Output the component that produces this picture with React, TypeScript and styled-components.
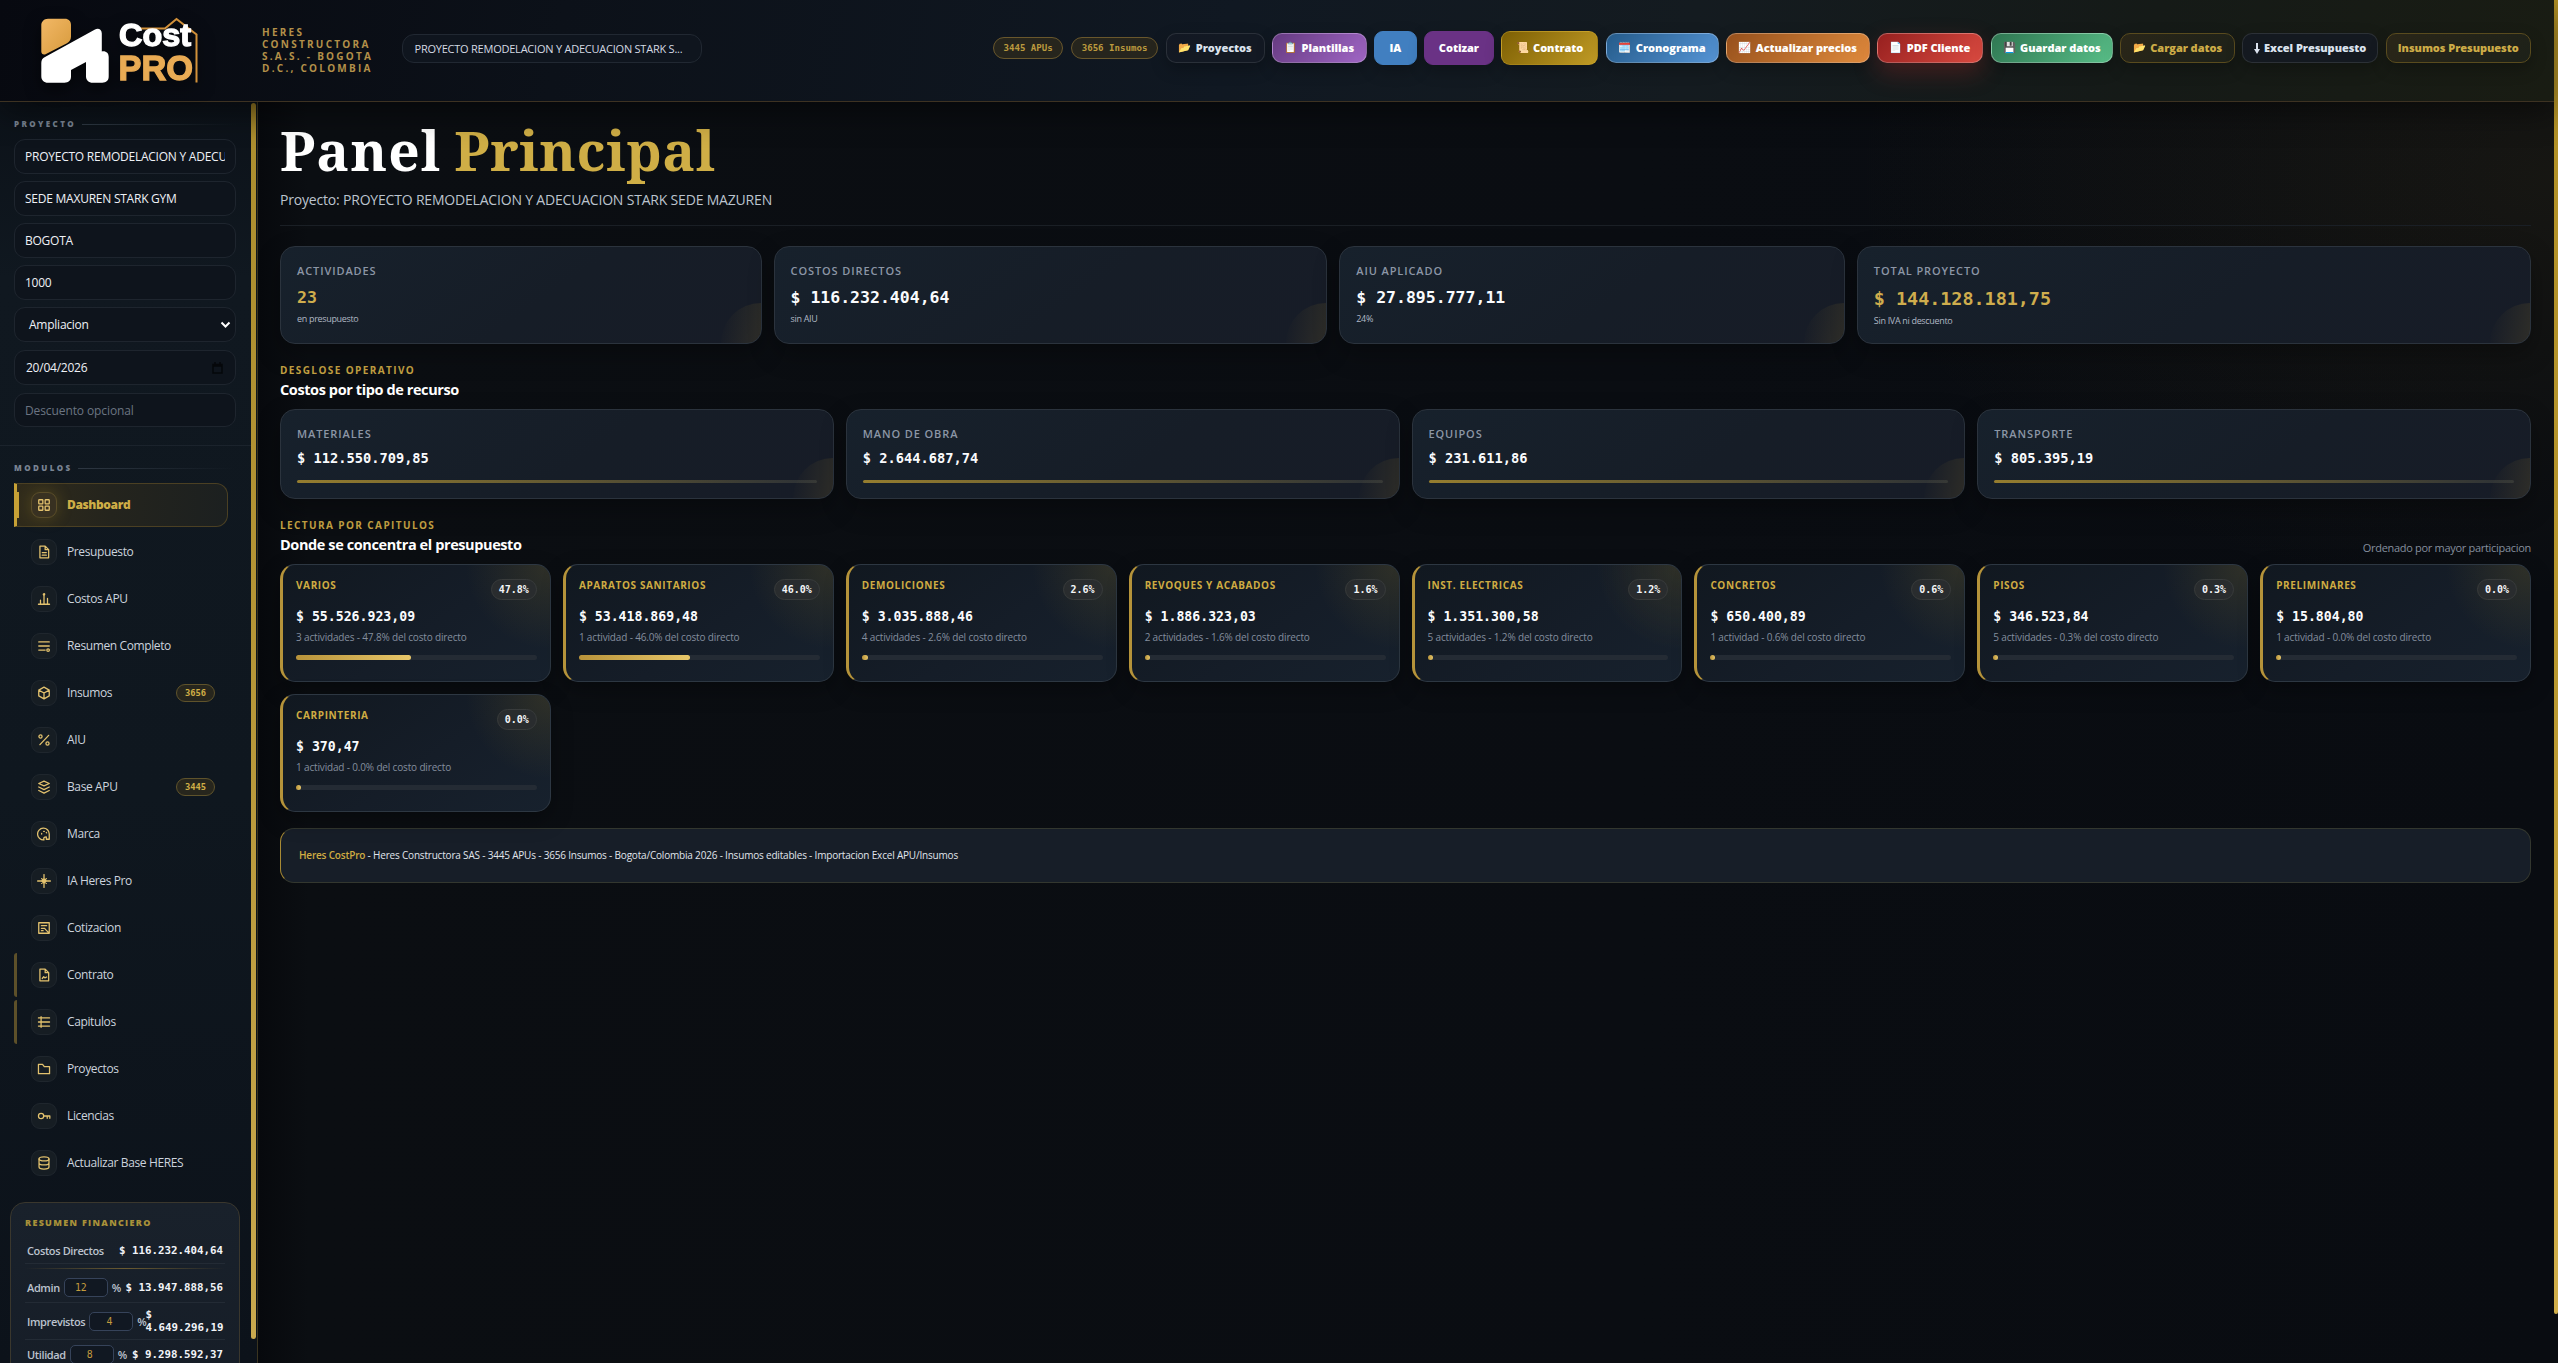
import React from "react";
import styled, { createGlobalStyle, css } from "styled-components";

const sans = `"Open Sans", "Noto Sans", sans-serif`;
const mono = `"DejaVu Sans Mono", monospace`;

const GlobalStyle = createGlobalStyle`
  * {
    box-sizing: border-box;
  }

  body {
    margin: 0;
    background: #090c11;
    color: #e9edf3;
    font-family: ${sans};
    overflow: hidden;
  }
`;

const Page = styled.div`
  display: flex;
  width: 2558px;
  height: 1363px;
  overflow: hidden;
`;

const Shell = styled.div`
  display: flex;
  flex-direction: column;
  flex: 1;
  min-width: 0;
`;

const PageScroll = styled.div`
  width: 4px;
  height: 1314px;
  background: linear-gradient(180deg, #b08f26 0%, #b8972f 50%, #d0ae4b 100%);
  border-radius: 0 0 3px 3px;
`;

/* ---------- header ---------- */

const Header = styled.header`
  display: flex;
  align-items: center;
  height: 102px;
  flex: none;
  padding: 0 23px 5px 41px;
  border-bottom: 1px solid #3d3222;
  background: linear-gradient(100deg, #070910 0%, #0c1119 22%, #101822 48%, #141b20 66%, #151a17 84%, #191c13 100%);
  box-shadow: 0 10px 30px rgba(0, 0, 0, 0.45);
  position: relative;
  z-index: 2;
`;

const Logo = styled.svg`
  width: 160px;
  height: 70px;
  margin: 6px 61px 0 0;
  flex: none;
  filter: drop-shadow(0 6px 8px rgba(0, 0, 0, 0.6));
`;

const Company = styled.div`
  width: 139.5px;
  flex: none;
  padding-top: 3px;
  font-size: 10px;
  font-weight: 700;
  line-height: 12px;
  letter-spacing: 2.25px;
  color: #b39049;
`;

const ProjectPill = styled.div`
  width: 300px;
  height: 29px;
  flex: none;
  padding: 0 12px;
  border: 1px solid #212832;
  border-radius: 12px;
  background: #0f151e;
  font-size: 11px;
  line-height: 28px;
  letter-spacing: -0.23px;
  white-space: nowrap;
  color: #d4dae3;
`;

const Actions = styled.div`
  display: flex;
  align-items: center;
  gap: 7.3px;
  margin-left: auto;
`;

const CountPill = styled.span<{ $w: number }>`
  width: ${(p) => p.$w}px;
  height: 22px;
  border: 1px solid #69572c;
  border-radius: 11px;
  background: #26251d;
  color: #bb9a3e;
  font: 700 9.1px/20px ${mono};
  text-align: center;
`;

type Tone = "dark" | "purple" | "blue" | "violet" | "gold" | "sky" | "orange" | "red" | "green" | "outline";

const tones: Record<Tone, ReturnType<typeof css>> = {
  dark: css`
    background: rgba(20, 26, 36, 0.75);
    border-color: rgba(255, 255, 255, 0.1);
    color: #dbe3ee;
  `,
  purple: css`
    background: linear-gradient(135deg, #653a80, #a066c5);
    border-color: rgba(255, 255, 255, 0.24);
  `,
  blue: css`
    background: #417fc0;
    border-color: #417fc0;
  `,
  violet: css`
    background: #6a3285;
    border-color: #6a3285;
  `,
  gold: css`
    background: linear-gradient(135deg, #7d5f04, #c09b25);
    border-color: rgba(215, 175, 50, 0.4);
  `,
  sky: css`
    background: linear-gradient(135deg, #255b8a, #5594d5);
    border-color: rgba(255, 255, 255, 0.25);
  `,
  orange: css`
    background: linear-gradient(135deg, #96501c, #df8b3d);
    border-color: rgba(255, 255, 255, 0.25);
  `,
  red: css`
    background: linear-gradient(135deg, #97201f, #d94a40);
    border-color: rgba(255, 255, 255, 0.25);
    box-shadow: 0 10px 24px rgba(190, 40, 35, 0.28);
  `,
  green: css`
    background: linear-gradient(135deg, #2f7752, #58bd87);
    border-color: rgba(255, 255, 255, 0.3);
  `,
  outline: css`
    background: linear-gradient(135deg, #2a2618, #1d2119);
    border-color: #594b1e;
    color: #cdac47;
  `,
};

const ActionButton = styled.button<{ $tone: Tone; $w: number; $tall?: boolean }>`
  display: flex;
  align-items: center;
  justify-content: center;
  gap: 4px;
  width: ${(p) => p.$w}px;
  height: ${(p) => (p.$tall ? 34 : 30)}px;
  padding: 0;
  border: 1px solid transparent;
  border-radius: ${(p) => (p.$tall ? 9 : 10)}px;
  color: #fff;
  font: 800 11px/16px ${sans};
  letter-spacing: -0.05px;
  white-space: nowrap;
  box-shadow: 0 6px 16px rgba(0, 0, 0, 0.25);
  ${(p) => tones[p.$tone]}
`;

const Emoji = styled.span`
  font: 10.5px/14px "Noto Color Emoji", sans-serif;
`;

const DownArrow = styled.svg`
  width: 6px;
  height: 11px;
  fill: #dbe3ee;
`;

/* ---------- sidebar ---------- */

const Body = styled.div`
  display: flex;
  flex: 1;
  min-height: 0;
`;

const Sidebar = styled.aside`
  display: flex;
  width: 258px;
  flex: none;
  border-right: 1px solid #3a3420;
  background: linear-gradient(180deg, #0c1219 0%, #101820 14%, #0f171f 55%, #0c121a 100%);
`;

const SidebarContent = styled.div`
  width: 251px;
  height: 1261px;
  overflow: hidden;
`;

const SidebarScroll = styled.div`
  width: 5px;
  height: 1236px;
  margin-top: 1px;
  border-radius: 3px;
  background: linear-gradient(180deg, #8f7422 0%, #ad8f2f 3%, #b59535 40%, #c9a94e 100%);
`;

const Section = styled.section`
  height: 344px;
  padding: 15px 15px 0 14px;
  border-bottom: 1px solid #1b232c;
`;

const SectionTitle = styled.div`
  display: flex;
  align-items: center;
  gap: 6px;
  height: 14px;
  font-size: 8px;
  font-weight: 800;
  line-height: 14px;
  letter-spacing: 2.4px;
  color: #7a8493;

  &::after {
    content: "";
    flex: 1;
    height: 1px;
    background: linear-gradient(90deg, #2e3742, transparent);
  }
`;

const Fields = styled.div`
  display: flex;
  flex-direction: column;
  gap: 7.3px;
  margin-top: 8px;
`;

const fieldBox = css`
  width: 222px;
  height: 34.7px;
  border: 1px solid #1e252e;
  border-radius: 11px;
  background: #0e141c;
  color: #eef1f6;
  font: 400 12px/16px ${sans};
  letter-spacing: -0.24px;
`;

const Field = styled.input`
  ${fieldBox}
  display: block;
  padding: 1px 10px 0;
  outline: none;

  &::placeholder {
    color: #6b7482;
    opacity: 1;
    letter-spacing: -0.1px;
  }
`;

const PickerField = styled.div<{ $indent: number }>`
  ${fieldBox}
  display: flex;
  align-items: center;
  justify-content: space-between;
  height: 35.5px;
  padding: 1px 4px 0 ${(p) => p.$indent}px;
`;

const Chevron = styled.svg`
  width: 11px;
  height: 8px;
  fill: none;
  stroke: #fff;
  stroke-width: 2;
`;

const Calendar = styled.svg`
  width: 11px;
  height: 12px;
  margin-right: 8px;
  fill: none;
  stroke: #05070a;
  stroke-width: 1.5;
`;

const Modules = styled.section`
  padding: 15px 15px 0 14px;
`;

const NavList = styled.nav`
  display: flex;
  flex-direction: column;
  gap: 3.5px;
  margin-top: 8px;
`;

const NavIcon = styled.span<{ $active?: boolean }>`
  display: grid;
  place-items: center;
  width: 26px;
  height: 26px;
  border: 1px solid ${(p) => (p.$active ? "#5a4d29" : "#1f262d")};
  border-radius: 9px;
  background: ${(p) => (p.$active ? "#383121" : "#161d23")};
  ${(p) => p.$active && "box-shadow: 0 0 16px rgba(201, 162, 39, 0.25);"}

  svg {
    width: 14px;
    height: 14px;
    fill: none;
    stroke: #e3c26e;
    stroke-width: 2.2;
    stroke-linecap: round;
    stroke-linejoin: round;
  }
`;

const NavItem = styled.a<{ $active?: boolean; $marked?: boolean }>`
  display: flex;
  align-items: center;
  gap: 10px;
  width: 214px;
  height: 43.5px;
  padding: 0 13px 0 14px;
  border: 0 solid transparent;
  border-left: 3px solid transparent;
  border-radius: 3px;
  font-size: 12px;
  line-height: 16px;
  letter-spacing: -0.38px;
  color: #ccd3dd;

  ${(p) =>
    p.$marked &&
    css`
      border-left-color: #5d5029;
    `}

  ${(p) =>
    p.$active &&
    css`
      border: 1px solid #4b4023;
      border-left: 3px solid #c7a136;
      border-radius: 0 12px 12px 0;
      padding-right: 12px;
      background: linear-gradient(90deg, #c7a136 0, #c7a136 2px, transparent 2px) 0 50% / 2px 26px no-repeat,
        linear-gradient(90deg, #302b1b 0%, #24241d 45%, #1c2020 100%);
      color: #cfae46;
      font-weight: 800;
    `}
`;

const NavBadge = styled.span`
  width: 39px;
  height: 18px;
  margin-left: auto;
  border: 1px solid #5f532b;
  border-radius: 9px;
  background: #27261d;
  color: #d0ae46;
  font: 700 8.8px/16px ${mono};
  letter-spacing: 0;
  text-align: center;
`;

const Finance = styled.section`
  width: 230px;
  height: 260px;
  margin: 17.5px 0 0 10px;
  padding: 14px 14px 0;
  border: 1px solid #3a372d;
  border-radius: 15px;
  background: linear-gradient(180deg, #19212b, #151c26);
`;

const FinanceTitle = styled.h3`
  margin: 0 0 9px;
  font-size: 9px;
  font-weight: 800;
  line-height: 12px;
  letter-spacing: 1.3px;
  color: #a89139;
`;

const FinanceRow = styled.div<{ $h: number }>`
  display: flex;
  align-items: center;
  height: ${(p) => p.$h}px;
  padding: 0 2px;
  border-bottom: 1px solid #232b35;
  font-size: 11px;
  font-weight: 600;
  letter-spacing: -0.38px;
  color: #bcc3ce;
`;

const Divider = styled.div`
  height: 1px;
  margin: 4px 0;
  background: linear-gradient(90deg, transparent, #6b5b31, transparent);
`;

const Percent = styled.span`
  width: 44px;
  height: 19px;
  margin: 0 4px;
  padding-right: 20px;
  border: 1px solid #36435a;
  border-radius: 5px;
  background: #111822;
  color: #c29a3d;
  font: 400 9.9px/17px ${mono};
  letter-spacing: 0;
  text-align: right;
  flex: none;
`;

const Amount = styled.strong`
  flex: 1;
  min-width: 0;
  font: 700 10.8px/13px ${mono};
  letter-spacing: 0;
  text-align: right;
  color: #f2f4f8;
  white-space: nowrap;
`;

const WrappedAmount = styled(Amount)`
  flex: none;
  width: 78px;
  margin-left: -1px;
  text-align: left;
`;

/* ---------- main ---------- */

const Main = styled.main`
  flex: 1;
  min-width: 0;
  padding: 16px 23px 0 22px;
  background: radial-gradient(700px 420px at 100% 6%, rgba(120, 95, 30, 0.12), transparent),
    linear-gradient(90deg, #07090d 0, #0b0e12 50px, #0a0d12 60%, #090c11 100%);
`;

const Heading = styled.div`
  height: 108px;
  border-bottom: 1px solid #1a1f25;
`;

const Title = styled.h1`
  margin: 0;
  font: 700 55px/64px "Noto Serif", Georgia, "Liberation Serif", serif;
  letter-spacing: 1.15px;
  word-spacing: -2.5px;
  color: #fff;

  span {
    letter-spacing: 0.6px;
    color: #cfae46;
  }
`;

const Subtitle = styled.p`
  margin: 8px 0 0;
  font-size: 14px;
  line-height: 20px;
  letter-spacing: -0.19px;
  color: #bcc4ce;
`;

const Kpis = styled.div`
  display: grid;
  grid-template-columns: 1fr 1.15fr 1.05fr 1.4fr;
  gap: 12px;
  margin-top: 20px;
`;

const Resources = styled(Kpis)`
  grid-template-columns: repeat(4, 1fr);
  margin-top: 9px;
`;

const Card = styled.article<{ $h: number }>`
  position: relative;
  height: ${(p) => p.$h}px;
  padding: 17px 16px 0;
  border: 1px solid #2b333d;
  border-radius: 15px;
  background: linear-gradient(145deg, #17212c, #161d27 55%, #171c27);
  box-shadow: 0 10px 26px rgba(0, 0, 0, 0.3);
  overflow: hidden;

  /* faint disc tucked into the corner */
  &::after {
    content: "";
    position: absolute;
    right: -40px;
    bottom: -40px;
    width: 80px;
    height: 80px;
    border-radius: 50%;
    background: linear-gradient(100deg, rgba(200, 160, 50, 0) 4%, rgba(200, 160, 50, 0.13) 50%);
  }
`;

const CardLabel = styled.div`
  font-size: 11px;
  font-weight: 600;
  line-height: 14px;
  letter-spacing: 0.9px;
  color: #8c96a6;
`;

const CardValue = styled.div<{ $gold?: boolean; $big?: boolean }>`
  margin-top: ${(p) => (p.$big ? 7 : 8)}px;
  font: 700 ${(p) => (p.$big ? 18.4 : 16.5)}px/${(p) => (p.$big ? 27 : 24)}px ${mono};
  color: ${(p) => (p.$gold ? "#cfad4d" : "#fafbfd")};
`;

const CardNote = styled.div`
  margin-top: 3px;
  font-size: 9px;
  line-height: 12px;
  letter-spacing: -0.32px;
  color: #b0b8c4;
`;

const ResourceValue = styled.div`
  margin-top: 7.5px;
  font: 700 13.7px/20px ${mono};
  color: #fafbfd;
`;

const ResourceBar = styled.div`
  height: 3px;
  margin-top: 11.5px;
  border-radius: 2px;
  background: linear-gradient(90deg, #957d2f, #635932 50%, #2c3136 100%);
`;

const SectionHead = styled.div`
  display: flex;
  align-items: flex-end;
  justify-content: space-between;
  margin-top: 19px;
`;

const Eyebrow = styled.div`
  font-size: 10px;
  font-weight: 700;
  line-height: 14px;
  letter-spacing: 1.4px;
  color: #c5a242;
`;

const SectionName = styled.h2`
  margin: 3px 0 0;
  font-size: 14.5px;
  font-weight: 700;
  line-height: 20px;
  letter-spacing: -0.4px;
  color: #fff;
`;

const Hint = styled.span`
  margin-bottom: -2px;
  font-size: 11px;
  line-height: 18px;
  letter-spacing: -0.3px;
  color: #858f9e;
`;

const ChapterGrid = styled.div`
  display: grid;
  grid-template-columns: repeat(8, 1fr);
  gap: 12.3px 12px;
  margin-top: 9px;
`;

const Chapter = styled.article`
  height: 117.7px;
  padding: 13px 13px 0;
  border: 1px solid #2d3742;
  border-left: 3px solid #b5933a;
  border-radius: 15px;
  background: radial-gradient(circle at 100% 0, rgba(140, 115, 35, 0.22), transparent 84px),
    linear-gradient(145deg, #111820, #151d28 55%, #17212d);
  box-shadow: 0 8px 22px rgba(0, 0, 0, 0.3);
`;

const ChapterTop = styled.div`
  display: flex;
  justify-content: space-between;
  height: 29px;
`;

const ChapterName = styled.h3`
  margin: 0;
  font-size: 10px;
  font-weight: 700;
  line-height: 14px;
  letter-spacing: 0.62px;
  color: #cfac42;
`;

const Share = styled.span`
  height: 21px;
  margin-top: 0.5px;
  padding: 0 7px;
  border: 1px solid #383b3b;
  border-radius: 11px;
  background: #292c2e;
  color: #f4f5f7;
  font: 700 10px/19px ${mono};
`;

const ChapterValue = styled.div`
  font: 700 13.2px/20px ${mono};
  color: #fafbfd;
`;

const ChapterNote = styled.div`
  margin-top: 3px;
  font-size: 10px;
  line-height: 14px;
  letter-spacing: -0.16px;
  color: #848e9e;
`;

const Track = styled.div`
  height: 5px;
  margin-top: 11px;
  border-radius: 3px;
  background: #242b34;
`;

const TrackFill = styled.div`
  min-width: 5px;
  height: 5px;
  border-radius: 3px;
  background: linear-gradient(90deg, #b8933a, #e7c669);
`;

const Footer = styled.footer`
  height: 54.7px;
  margin-top: 16.3px;
  padding-left: 18px;
  border: 1px solid #33372f;
  border-left-color: #a88a34;
  border-radius: 14px;
  background: #171e28;
  font-size: 10px;
  line-height: 53px;
  letter-spacing: -0.19px;
  color: #e0e5ec;

  strong {
    color: #cfac42;
    font-weight: 600;
  }
`;

const icons: Record<string, React.ReactNode> = {
  grid: (
    <>
      <rect x="3" y="3" width="7" height="7" rx="1" />
      <rect x="14" y="3" width="7" height="7" rx="1" />
      <rect x="3" y="14" width="7" height="7" rx="1" />
      <rect x="14" y="14" width="7" height="7" rx="1" />
    </>
  ),
  file: <path d="M5 2h9l6 6v14H5zM14 2v6h6M9 13h7M9 17.500h7" />,
  chart: (
    <>
      <path d="M2.500 21h19M6 20v-6M12 20V6M18 20v-9" />
      <circle cx="12" cy="4" r="1.200" />
    </>
  ),
  list: (
    <>
      <path d="M3 5h18M3 12h18M3 19h11" />
      <circle cx="19" cy="19" r="2.200" />
    </>
  ),
  box: <path d="M12 2l9 5v10l-9 5-9-5V7zM3 7l9 5 9-5M12 12v10" />,
  percent: (
    <>
      <path d="M20 4L5 20" />
      <circle cx="6" cy="6" r="2.700" />
      <circle cx="18" cy="18" r="2.700" />
    </>
  ),
  layers: <path d="M12 2l9 4-9 4-9-4zM3 12l9 4.500 9-4.500M3 18l9 4.500 9-4.500" />,
  palette: (
    <>
      <path d="M12 22a10 10 0 1 1 9-10v9h-5v-4c-4 0-5 2-4 5z" />
      <path d="M8 11v1M11.500 7.500h1M16 9.500l.5.5" />
    </>
  ),
  spark: <path d="M12 1v22M1 12h22M8 8l8 8M16 8l-8 8M12 8l4 4-4 4-4-4z" />,
  quote: <path d="M3 3h18v18H3zM7.500 8h9M7.500 12.500h6M7.500 16.500h3M14 14l6 6" />,
  contract: <path d="M5 2h9l6 6v14H5zM14 2v6h6M9 18l2.500-3 2 2 3-1.500" />,
  outline: <path d="M2.500 5h19M2.500 12h19M2.500 19h19M7 3v18" />,
  folder: <path d="M2.500 4h7l3 4h9v12h-19z" />,
  key: (
    <>
      <circle cx="7" cy="12" r="4.500" />
      <path d="M12 12h10v4M17.500 12v4" />
    </>
  ),
  base: (
    <>
      <ellipse cx="12" cy="5" rx="8.500" ry="3.500" />
      <path d="M3.500 5v14c0 4.500 17 4.500 17 0V5M3.500 12c0 4.500 17 4.500 17 0" />
    </>
  ),
};

const modules = [
  { name: "Dashboard", icon: "grid", active: true },
  { name: "Presupuesto", icon: "file" },
  { name: "Costos APU", icon: "chart" },
  { name: "Resumen Completo", icon: "list" },
  { name: "Insumos", icon: "box", badge: "3656" },
  { name: "AIU", icon: "percent" },
  { name: "Base APU", icon: "layers", badge: "3445" },
  { name: "Marca", icon: "palette" },
  { name: "IA Heres Pro", icon: "spark" },
  { name: "Cotizacion", icon: "quote" },
  { name: "Contrato", icon: "contract", marked: true },
  { name: "Capitulos", icon: "outline", marked: true },
  { name: "Proyectos", icon: "folder" },
  { name: "Licencias", icon: "key" },
  { name: "Actualizar Base HERES", icon: "base" },
];

const actions: { label: string; tone: Tone; w: number; emoji?: string; tall?: boolean; arrow?: boolean }[] = [
  { label: "Proyectos", tone: "dark", w: 99, emoji: "📂" },
  { label: "Plantillas", tone: "purple", w: 94.5, emoji: "📋" },
  { label: "IA", tone: "blue", w: 43, tall: true },
  { label: "Cotizar", tone: "violet", w: 69.5, tall: true },
  { label: "Contrato", tone: "gold", w: 97.5, emoji: "📜", tall: true },
  { label: "Cronograma", tone: "sky", w: 113, emoji: "🗓️" },
  { label: "Actualizar precios", tone: "orange", w: 143.5, emoji: "📈" },
  { label: "PDF Cliente", tone: "red", w: 106.5, emoji: "📄" },
  { label: "Guardar datos", tone: "green", w: 122.5, emoji: "💾" },
  { label: "Cargar datos", tone: "outline", w: 114.5, emoji: "📂" },
  { label: "Excel Presupuesto", tone: "dark", w: 136, arrow: true },
  { label: "Insumos Presupuesto", tone: "outline", w: 145.5 },
];

const kpis = [
  { label: "ACTIVIDADES", value: "23", note: "en presupuesto", gold: true },
  { label: "COSTOS DIRECTOS", value: "$ 116.232.404,64", note: "sin AIU" },
  { label: "AIU APLICADO", value: "$ 27.895.777,11", note: "24%" },
  { label: "TOTAL PROYECTO", value: "$ 144.128.181,75", note: "Sin IVA ni descuento", gold: true, big: true },
];

const resources = [
  ["MATERIALES", "$ 112.550.709,85"],
  ["MANO DE OBRA", "$ 2.644.687,74"],
  ["EQUIPOS", "$ 231.611,86"],
  ["TRANSPORTE", "$ 805.395,19"],
];

const chapters = [
  { name: "VARIOS", value: "$ 55.526.923,09", count: "3 actividades", share: 47.8 },
  { name: "APARATOS SANITARIOS", value: "$ 53.418.869,48", count: "1 actividad", share: 46 },
  { name: "DEMOLICIONES", value: "$ 3.035.888,46", count: "4 actividades", share: 2.6 },
  { name: "REVOQUES Y ACABADOS", value: "$ 1.886.323,03", count: "2 actividades", share: 1.6 },
  { name: "INST. ELECTRICAS", value: "$ 1.351.300,58", count: "5 actividades", share: 1.2 },
  { name: "CONCRETOS", value: "$ 650.400,89", count: "1 actividad", share: 0.6 },
  { name: "PISOS", value: "$ 346.523,84", count: "5 actividades", share: 0.3 },
  { name: "PRELIMINARES", value: "$ 15.804,80", count: "1 actividad", share: 0 },
  { name: "CARPINTERIA", value: "$ 370,47", count: "1 actividad", share: 0 },
];

const BrandLogo: React.FC = () => (
  <Logo viewBox="41 16 160 70">
    <defs>
      <linearGradient id="brandGold" x1="0" y1="0" x2="1" y2="1">
        <stop offset="0" stopColor="#f2b866" />
        <stop offset="1" stopColor="#d79a3c" />
      </linearGradient>
    </defs>
    <path
      d="M48 18.700h17c3.500 0 6 2.500 6 6v12c0 3-1.500 5-4 6.500L46 54c-2.500 1.300-4.700 0-4.700-2.500V25.500c0-4 2.700-6.800 6.700-6.800z"
      fill="url(#brandGold)"
    />
    <path
      d="M45 57L95 29.500c3.500-2 6.800.3 6.800 4v18c4-.8 6.900 1.500 6.900 5.500v19.500c0 4-2.500 6.200-6.500 6.200h-9.500c-4 0-6.700-2.500-6.700-6.500V62L71 70v6.500c0 4-2.500 6.200-6.500 6.200H48c-4 0-6.700-2.500-6.700-6.500V63c0-3 1.200-4.700 3.700-6z"
      fill="#fff"
    />
    <path d="M139 28.500h26L176.500 19l20 15.500v48" fill="none" stroke="#d2913a" strokeWidth="2" />
    <text
      x="119"
      y="46.300"
      fontFamily="Liberation Sans"
      fontWeight="700"
      fontSize="30.500"
      textLength="72"
      lengthAdjust="spacingAndGlyphs"
      fill="#fff"
      stroke="#fff"
      strokeWidth="1.300"
    >
      Cost
    </text>
    <text
      x="118.500"
      y="79.800"
      fontFamily="Liberation Sans"
      fontWeight="700"
      fontSize="34.500"
      textLength="74.500"
      lengthAdjust="spacingAndGlyphs"
      fill="#e9ab54"
      stroke="#e9ab54"
      strokeWidth="1.300"
    >
      PRO
    </text>
  </Logo>
);

const App: React.FC = () => {
  return (
    <>
      <GlobalStyle />
      <Page>
        <Shell>
          <Header>
            <BrandLogo />
            <Company>
              HERES
              <br />
              CONSTRUCTORA
              <br />
              S.A.S. - BOGOTA
              <br />
              D.C., COLOMBIA
            </Company>
            <ProjectPill>PROYECTO REMODELACION Y ADECUACION STARK S...</ProjectPill>
            <Actions>
              <CountPill $w={70.4}>3445 APUs</CountPill>
              <CountPill $w={87.8}>3656 Insumos</CountPill>
              {actions.map((action) => (
                <ActionButton key={action.label} $tone={action.tone} $w={action.w} $tall={action.tall}>
                  {action.emoji && <Emoji>{action.emoji}</Emoji>}
                  {action.arrow && (
                    <DownArrow viewBox="0 0 6 11">
                      <path d="M2 0h2v6h2l-3 5-3-5h2z" />
                    </DownArrow>
                  )}
                  {action.label}
                </ActionButton>
              ))}
            </Actions>
          </Header>

          <Body>
            <Sidebar>
              <SidebarContent>
                <Section>
                  <SectionTitle>PROYECTO</SectionTitle>
                  <Fields>
                    <Field defaultValue="PROYECTO REMODELACION Y ADECUACION STARK SEDE MAZUREN" />
                    <Field defaultValue="SEDE MAXUREN STARK GYM" />
                    <Field defaultValue="BOGOTA" />
                    <Field defaultValue="1000" />
                    <PickerField $indent={14}>
                      Ampliacion
                      <Chevron viewBox="0 0 11 8">
                        <path d="M1.500 1.500l4 4 4-4" />
                      </Chevron>
                    </PickerField>
                    <PickerField $indent={11}>
                      20/04/2026
                      <Calendar viewBox="0 0 11 12">
                        <path d="M1 2.500h9v8.500H1zM1 4h9M3 0v2M8 0v2" />
                      </Calendar>
                    </PickerField>
                    <Field placeholder="Descuento opcional" />
                  </Fields>
                </Section>

                <Modules>
                  <SectionTitle>MODULOS</SectionTitle>
                  <NavList>
                    {modules.map((item) => (
                      <NavItem key={item.name} $active={item.active} $marked={item.marked}>
                        <NavIcon $active={item.active}>
                          <svg viewBox="0 0 24 24">{icons[item.icon]}</svg>
                        </NavIcon>
                        <span>{item.name}</span>
                        {item.badge && <NavBadge>{item.badge}</NavBadge>}
                      </NavItem>
                    ))}
                  </NavList>
                </Modules>

                <Finance>
                  <FinanceTitle>RESUMEN FINANCIERO</FinanceTitle>
                  <FinanceRow $h={26}>
                    <span>Costos Directos</span>
                    <Amount>$ 116.232.404,64</Amount>
                  </FinanceRow>
                  <Divider />
                  <FinanceRow $h={30}>
                    <span>Admin</span>
                    <Percent>12</Percent>
                    <span>%</span>
                    <Amount>$ 13.947.888,56</Amount>
                  </FinanceRow>
                  <FinanceRow $h={37}>
                    <span>Imprevistos</span>
                    <Percent>4</Percent>
                    <span>%</span>
                    <WrappedAmount>
                      $<br />
                      4.649.296,19
                    </WrappedAmount>
                  </FinanceRow>
                  <FinanceRow $h={30}>
                    <span>Utilidad</span>
                    <Percent>8</Percent>
                    <span>%</span>
                    <Amount>$ 9.298.592,37</Amount>
                  </FinanceRow>
                </Finance>
              </SidebarContent>
              <SidebarScroll />
            </Sidebar>

            <Main>
              <Heading>
                <Title>
                  Panel <span>Principal</span>
                </Title>
                <Subtitle>Proyecto: PROYECTO REMODELACION Y ADECUACION STARK SEDE MAZUREN</Subtitle>
              </Heading>

              <Kpis>
                {kpis.map((kpi) => (
                  <Card key={kpi.label} $h={97.7}>
                    <CardLabel>{kpi.label}</CardLabel>
                    <CardValue $gold={kpi.gold} $big={kpi.big}>
                      {kpi.value}
                    </CardValue>
                    <CardNote>{kpi.note}</CardNote>
                  </Card>
                ))}
              </Kpis>

              <SectionHead>
                <div>
                  <Eyebrow>DESGLOSE OPERATIVO</Eyebrow>
                  <SectionName>Costos por tipo de recurso</SectionName>
                </div>
              </SectionHead>
              <Resources>
                {resources.map(([label, value]) => (
                  <Card key={label} $h={90.7}>
                    <CardLabel>{label}</CardLabel>
                    <ResourceValue>{value}</ResourceValue>
                    <ResourceBar />
                  </Card>
                ))}
              </Resources>

              <SectionHead>
                <div>
                  <Eyebrow>LECTURA POR CAPITULOS</Eyebrow>
                  <SectionName>Donde se concentra el presupuesto</SectionName>
                </div>
                <Hint>Ordenado por mayor participacion</Hint>
              </SectionHead>
              <ChapterGrid>
                {chapters.map((chapter) => (
                  <Chapter key={chapter.name}>
                    <ChapterTop>
                      <ChapterName>{chapter.name}</ChapterName>
                      <Share>{chapter.share.toFixed(1)}%</Share>
                    </ChapterTop>
                    <ChapterValue>{chapter.value}</ChapterValue>
                    <ChapterNote>
                      {chapter.count} - {chapter.share.toFixed(1)}% del costo directo
                    </ChapterNote>
                    <Track>
                      <TrackFill style={{ width: `${chapter.share}%` }} />
                    </Track>
                  </Chapter>
                ))}
              </ChapterGrid>

              <Footer>
                <strong>Heres CostPro</strong> - Heres Constructora SAS - 3445 APUs - 3656 Insumos - Bogota/Colombia
                2026 - Insumos editables - Importacion Excel APU/Insumos
              </Footer>
            </Main>
          </Body>
        </Shell>
        <PageScroll />
      </Page>
    </>
  );
};

export default App;
